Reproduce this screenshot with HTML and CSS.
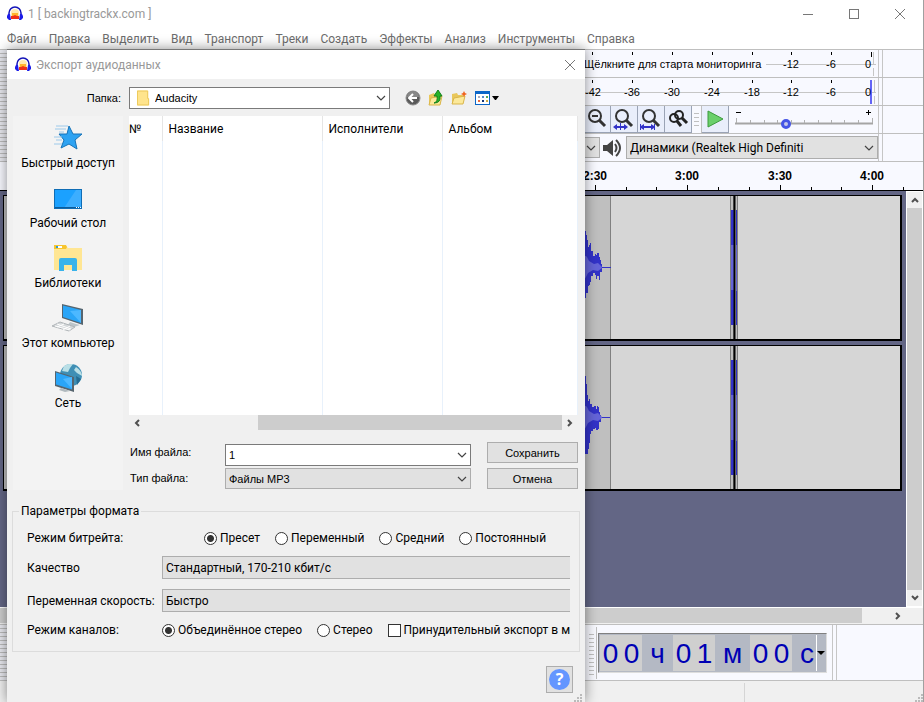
FILE: index.html
```html
<!DOCTYPE html>
<html lang="ru">
<head>
  <meta charset="UTF-8" />
  <meta name="viewport" content="width=device-width, initial-scale=1.0"/>
  <title>1 [ backingtrackx.com ]</title>
  <link rel="stylesheet" href="styles.css">
</head>
<body>

  <!-- shared symbols -->
  <svg class="defs" aria-hidden="true">
    <symbol id="logo" viewBox="0 0 16 16">
      <path d="M4 13V7a4 4 0 0 1 8 0v6z" fill="#ffe9b0"/>
      <path d="M5 7h6v4H5z" fill="#ffb52e"/>
      <path d="M4 10h2l2-1 2 1h2v3H4z" fill="#f0301a"/>
      <path d="M2 9V7a6 6 0 0 1 12 0v2" fill="none" stroke="#1414b8" stroke-width="1.500"/>
      <path d="M1 8h2l1 6H2L0 12V10zM15 8h-2l-1 6h2l2-2V10z" fill="#1c1ce8"/>
    </symbol>
    <symbol id="chevron" viewBox="0 0 10 6">
      <path d="M1 1l4 4 4-4" fill="none" stroke="#444" stroke-width="1.2"/>
    </symbol>
    <symbol id="arrow" viewBox="0 0 8 8">
      <path d="M1 6l3-3 3 3" fill="none" stroke="#505050" stroke-width="2"/>
    </symbol>
    <symbol id="close" viewBox="0 0 10 10">
      <path d="M0 0l10 10M10 0L0 10" fill="none" stroke="#777" stroke-width="1"/>
    </symbol>
    <symbol id="lens" viewBox="0 0 22 22">
      <circle cx="9" cy="8" r="6" fill="none" stroke="#333" stroke-width="2"/>
      <path d="M13 12l6 6" stroke="#333" stroke-width="3"/>
    </symbol>
    <symbol id="grip" viewBox="0 0 8 8">
      <path d="M6 0h2v2H6zM3 3h2v2H3zM6 3h2v2H6zM0 6h2v2H0zM3 6h2v2H3zM6 6h2v2H6z" fill="#bbb"/>
    </symbol>
  </svg>

  <div class="window">
    <header class="titlebar">
      <svg class="logo"><use href="#logo"/></svg>
      <h1>1 [ backingtrackx.com ]</h1>
      <div class="window-buttons">
        <button aria-label="Свернуть"><svg width="10" height="10"><path d="M0 5.5h10" stroke="#777"/></svg></button>
        <button aria-label="Развернуть"><svg width="10" height="10"><rect x=".5" y=".5" width="9" height="9" fill="none" stroke="#777"/></svg></button>
        <button aria-label="Закрыть"><svg width="10" height="10"><use href="#close"/></svg></button>
      </div>
    </header>

    <nav class="menubar">
      <a href="#">Файл</a>
      <a href="#">Правка</a>
      <a href="#">Выделить</a>
      <a href="#">Вид</a>
      <a href="#">Транспорт</a>
      <a href="#">Треки</a>
      <a href="#">Создать</a>
      <a href="#">Эффекты</a>
      <a href="#">Анализ</a>
      <a href="#">Инструменты</a>
      <a href="#">Справка</a>
    </nav>

    <!-- Toolbars -->
    <div class="toolbars">
      <div class="toolbar">
        <div class="dock"></div>
        <div class="tools">
          <svg class="meter" width="293" height="27">
            <path d="M0 14.500H292" stroke="#c6c6c6"/>
            <path d="M8.500 2v3M48.500 2v3M88.500 2v3M128.500 2v3M168.500 2v3M207.500 2v3M247.500 2v3M287.500 2v5" stroke="#000"/>
            <rect x="0" y="6" width="182" height="16" fill="#f8f9ff"/>
            <text x="0" y="18" class="hint">Щёлкните для старта мониторинга</text>
            <g class="marks"><text x="207" y="18">-12</text><text x="247" y="18">-6</text><text x="284" y="18">0</text></g>
            <path d="M289.500 2v12M289.500 18v8" stroke="#c6c6c6"/>
          </svg>
        </div>
      </div>
      <div class="toolbar">
        <div class="dock"></div>
        <div class="tools">
          <svg class="meter" width="293" height="27">
            <path d="M0 14.500H292" stroke="#c6c6c6"/>
            <path d="M8.500 2v3M48.500 2v3M88.500 2v3M128.500 2v3M168.500 2v3M207.500 2v3M247.500 2v3M287.500 2v5" stroke="#000"/>
            <rect x="286" y="2" width="2" height="24" fill="#6464f5"/>
            <g class="marks"><text x="9" y="18">-42</text><text x="48" y="18">-36</text><text x="88" y="18">-30</text><text x="128" y="18">-24</text><text x="168" y="18">-18</text><text x="207" y="18">-12</text><text x="247" y="18">-6</text><text x="284" y="18">0</text></g>
            <path d="M290.500 2v12M290.500 18v8" stroke="#c6c6c6"/>
          </svg>
        </div>
      </div>
      <div class="toolbar">
        <div class="dock"></div>
        <div class="tools">
          <button class="tool" aria-label="Уменьшить"><svg viewBox="0 0 22 22"><use href="#lens"/><path d="M6 8h6" stroke="#333" stroke-width="2"/></svg></button>
          <button class="tool" aria-label="Вместить выделенное"><svg viewBox="0 0 22 22"><use href="#lens"/><path d="M0 19l4-3v2h3v-3h1v3h3v-2l4 3-4 3v-2H8v2H7v-2H4v2z" fill="#3232c8"/></svg></button>
          <button class="tool" aria-label="Вместить проект"><svg viewBox="0 0 22 22"><use href="#lens"/><path d="M0 16h1v2l3-2v2h7v-2l3 2v-2h1v6h-1v-2l-3 2v-2H4v2l-3-2v2H0z" fill="#3232c8"/></svg></button>
          <button class="tool" aria-label="Переключить масштаб"><svg viewBox="0 0 22 22"><circle cx="7" cy="10" r="4" fill="none" stroke="#222" stroke-width="2"/><path d="M10 13l4 5" stroke="#222" stroke-width="3"/><circle cx="12" cy="7" r="4" fill="none" stroke="#222" stroke-width="2"/><path d="M15 10l5 5" stroke="#222" stroke-width="3"/></svg></button>
          <span class="gripper small"></span>
          <button class="tool play" aria-label="Воспроизвести"><svg viewBox="0 0 22 22"><path d="M4 3l15 8-15 8z" fill="#6bd06b" stroke="#3d9a3d"/></svg></button>
          <div class="speed">
            <svg width="140" height="27">
              <path d="M1 6.500h5M131 6.500h5M133.500 4v5" stroke="#000"/>
              <path d="M0 17.500h138" stroke="#a5a5a5" stroke-width="2"/>
              <path d="M1.500 12v5M15.500 14v3M29.500 14v3M42.500 14v3M56.500 14v3M69.500 14v3M83.500 14v3M96.500 14v3M109.500 14v3M123.500 14v3M137.500 12v5" stroke="#b0b0b0"/>
            </svg>
            <input type="range" min="0" max="100" value="36" aria-label="Скорость">
          </div>
        </div>
      </div>
      <div class="toolbar">
        <div class="dock"></div>
        <div class="tools devices">
          <div class="select channels">
            <select aria-label="Каналы"><option></option></select>
            <svg class="chevron"><use href="#chevron"/></svg>
          </div>
          <svg class="speaker" viewBox="0 0 20 20"><path d="M0 7h4l6-5v16l-6-5H0z" fill="#444"/><path d="M12 6q3 4 0 8M13 2q8 8 0 16" fill="none" stroke="#444" stroke-width="2"/></svg>
          <div class="select output">
            <select aria-label="Устройство воспроизведения"><option>Динамики (Realtek High Definiti</option></select>
            <svg class="chevron"><use href="#chevron"/></svg>
          </div>
        </div>
      </div>
    </div>

    <!-- Timeline -->
    <div class="timeline">
      <svg width="924" height="28">
        <g class="times"><text x="595" y="18">2:30</text><text x="687" y="18">3:00</text><text x="780" y="18">3:30</text><text x="872" y="18">4:00</text></g>
        <path d="M595.500 23v5M687.500 23v5M780.500 23v5M872.500 23v5M626.500 25v3M656.500 25v3M718.500 25v3M749.500 25v3M811.500 25v3M841.500 25v3M903.500 25v3" stroke="#000"/>
      </svg>
    </div>

    <!-- Tracks -->
    <div class="workspace">
      <div class="tracks">
        <div class="track">
          <svg class="wave" width="735" height="143">
            <rect x="0" y="0" width="606" height="143" fill="#bfbfbf"/>
            <path d="M606.500 0v143" stroke="#808080"/>
            <path d="M575 35h7v4h1v5h1v7h1v-2h1v-2h1v8h2v5h2v-2h1v1h1v-2h2v4h1v3h1v4h1v3h9v1h-9v4h-2v8h-1v-4h-2v3h-1v-4h-1v-2h-2v3h-2v6h-1v3h-1v1h-1v7h-2v5h-7z" fill="#3232c8"/>
            <path d="M575 60h7l1 1 2 4 5 3 4-1 2 2 2 2v1l-4 3-5-1-5 3-2 4-2 3h-5z" fill="#6464d8"/>
            <rect x="726" y="0" width="8" height="143" fill="#bfbfbf"/>
            <path d="M727 14h3v115h-3zM732 14h1v115h-1z" fill="#3232c8"/>
            <path d="M727 49h3v45h-3zM732 49h1v46h-1z" fill="#6464d8"/>
            <path d="M726.500 0v143M729.500 0v14M729.500 129v14M733.500 0v143" stroke="#808080"/>
            <path d="M730.500 0v143" stroke="#000" stroke-width="2"/>
          </svg>
        </div>
        <div class="track">
          <svg class="wave" width="735" height="143">
            <rect x="0" y="0" width="606" height="143" fill="#bfbfbf"/>
            <path d="M606.500 0v143" stroke="#808080"/>
            <path d="M575 30h7v8h1v11h1v6h1v-2h1v5h2v3h2v-1h2v3h1v-3h1v1h1v5h1v3h1v2h9v1h-9v4h-2v7h-1v1h-2v-2h-1v1h-2v2h-2v3h-1v9h-1v6h-1v5h-7z" fill="#3232c8"/>
            <path d="M575 60h7l1 1 2 4 5 3 4-1 2 2 2 2v1l-4 3-5-1-5 3-2 4-2 3h-5z" fill="#6464d8"/>
            <rect x="726" y="0" width="8" height="143" fill="#bfbfbf"/>
            <path d="M727 14h3v115h-3zM732 14h1v115h-1z" fill="#3232c8"/>
            <path d="M727 49h3v45h-3zM732 49h1v46h-1z" fill="#6464d8"/>
            <path d="M726.500 0v143M729.500 0v14M729.500 129v14M733.500 0v143" stroke="#808080"/>
            <path d="M730.500 0v143" stroke="#000" stroke-width="2"/>
          </svg>
        </div>
      </div>
      <div class="scroll-v">
        <button aria-label="Вверх"><svg width="8" height="8"><use href="#arrow"/></svg></button>
        <div class="thumb"></div>
        <button aria-label="Вниз" class="down"><svg width="8" height="8"><use href="#arrow"/></svg></button>
      </div>
    </div>
    <div class="scroll-h">
      <div class="thumb"></div>
      <button aria-label="Вправо" class="right"><svg width="8" height="8"><use href="#arrow"/></svg></button>
    </div>

    <!-- Time display -->
    <div class="bottombar">
      <div class="dock"></div>
      <div class="time-tool">
        <span class="gripper"></span>
        <div class="clock">
          <span class="digit">0</span><span class="digit">0</span><span class="unit">ч</span>
          <span class="digit">0</span><span class="digit">1</span><span class="unit wide">м</span>
          <span class="digit">0</span><span class="digit">0</span><span class="unit last">с</span>
          <button aria-label="Формат времени"><svg width="8" height="4"><path d="M0 0h8L4 4z"/></svg></button>
        </div>
      </div>
    </div>
    <footer class="statusbar">
      <div class="status-left"></div>
      <div class="status-right"><svg width="8" height="8"><use href="#grip"/></svg></div>
    </footer>
  </div>

  <!-- Export dialog -->
  <form class="dialog" role="dialog" aria-labelledby="dialog-title">
    <div class="dialog-title">
      <svg class="logo"><use href="#logo"/></svg>
      <h2 id="dialog-title">Экспорт аудиоданных</h2>
      <button type="button" aria-label="Закрыть"><svg width="10" height="10"><use href="#close"/></svg></button>
    </div>

    <div class="folder-row">
      <label for="folder">Папка:</label>
      <div class="select folder">
        <svg class="folder-icon" viewBox="0 0 14 16"><path d="M0 0h12v9h1v7H0z" fill="#ffe48c"/><path d="M.5.500h11v8h1v7H.500z" fill="none" stroke="#ecc758"/></svg>
        <select id="folder"><option>Audacity</option></select>
        <svg class="chevron"><use href="#chevron"/></svg>
      </div>
      <div class="folder-tools">
        <button type="button" aria-label="Назад"><svg width="16" height="16"><circle cx="8" cy="8" r="7" fill="#5a5a5a" stroke="#8c8c8c"/><path d="M2 7a6 6 0 0 1 12 0z" fill="#888"/><path d="M12 8H5M8 4L4 8l4 4" fill="none" stroke="#fff" stroke-width="2"/></svg></button>
        <button type="button" aria-label="Вверх"><svg width="16" height="16"><path d="M1 5l5-2 1 2h5v10H1z" fill="#e9c75a"/><path d="M3 8l11-2-2 9H1z" fill="#fce99a" stroke="#d9b54a"/><path d="M6 13q4-1 3-7H6l4-6 4 6h-2q1 7-6 7z" fill="#27b327" stroke="#13801b"/></svg></button>
        <button type="button" aria-label="Новая папка"><svg width="16" height="16"><path d="M1 4l5-1 1 2h5v9H1z" fill="#e9c75a"/><path d="M3 8l11-2-2 8H1z" fill="#fce99a" stroke="#d9b54a"/><path d="M13 1l1 2 2 1-2 1-1 2-1-2-2-1 2-1z" fill="#f0641e"/></svg></button>
        <button type="button" aria-label="Вид"><svg width="25" height="16"><rect x="1.500" y="2.500" width="14" height="12" fill="#fff" stroke="#0b66c8"/><path d="M1 1h15v3H1z" fill="#0b66c8"/><path d="M4 6h2v2H4z" fill="#aab"/><path d="M8 6h2v2H8z" fill="#58c"/><path d="M12 6h2v2h-2z" fill="#5a5"/><path d="M4 10h2v2H4z" fill="#e86a3a"/><path d="M8 10h2v2H8z" fill="#137"/><path d="M12 10h2v2h-2z" fill="#ca4"/><path d="M18 6h7l-3 4h-1z"/></svg></button>
      </div>
    </div>

    <div class="browser">
      <div class="places">
        <button type="button">
          <svg width="32" height="28"><path d="M17 2l4 8 9 0-7 6 2 9-8-5-8 4 3-8-5-6h8z" fill="#2ea3f2" stroke="#1673b8"/><path d="M4 2h12M3 5h11M7 8h5M2 13h8M4 16h6M2 20h8" stroke="#9cc9ea"/></svg>
          Быстрый доступ
        </button>
        <button type="button">
          <svg width="32" height="28"><rect x="2.500" y="5.500" width="27" height="19" fill="#1ba1ff" stroke="#0f6db5"/><path d="M12 24L24 6h5v18z" fill="#3caeff"/><path d="M3 23.500h26" stroke="#0b5c9c"/><path d="M24 23.500h5" stroke="#fff" stroke-dasharray="1 1"/></svg>
          Рабочий стол
        </button>
        <button type="button">
          <svg width="32" height="28"><path d="M2 2h12l2 2h14v22H2z" fill="#ffe693"/><path d="M2 1h12l1 2-1 2H2z" fill="#f7c52e"/><path d="M4 2h6v2H4z" fill="#fff"/><path d="M4 2h2v2H4z" fill="#2e9bd6"/><path d="M7 27V16q0-2 2-2h14q2 0 2 2v11h-5v-6h-8v6z" fill="#39b3ea"/></svg>
          Библиотеки
        </button>
        <button type="button">
          <svg width="32" height="28"><path d="M10 0l21 5v16l-21-7z" fill="#56656f"/><path d="M11 1.500l18 4.500v13l-18-6z" fill="#2aa5f7"/><path d="M18 7l11-1v13z" fill="#4db8ff"/><path d="M18 18l6 2 4 1-6 2-6-2z" fill="#bcc5ca"/><path d="M8 18l15 5-6 4-17-5z" fill="#d5d9db" stroke="#b0b5b8"/><path d="M5 20l14 5M3 22l15 4M12 20l-7 3M18 22l-7 4" stroke="#fff"/></svg>
          Этот компьютер
        </button>
        <button type="button">
          <svg width="32" height="28"><circle cx="19" cy="11" r="11" fill="#3f8fb5"/><path d="M12 2q5-3 9-2l-3 4-2 4-6-1zM24 3q6 4 6 9l-5-3-3-3z" fill="#b9dfe6"/><path d="M24 12l5 3-4 6z" fill="#256c93"/><path d="M3 7l19 6v15L3 22z" fill="#56656f"/><path d="M4 8.500l16 5v12L4 20.500z" fill="#2aa5f7"/><path d="M11 15l9-2v12z" fill="#4db8ff"/><path d="M9 24l9 3-5 1-6-2z" fill="#b0b9be"/></svg>
          Сеть
        </button>
      </div>

      <div class="main-pane">
        <table class="files">
          <thead>
            <tr><th>№</th><th>Название</th><th>Исполнители</th><th>Альбом</th></tr>
          </thead>
          <tbody>
            <tr><td></td><td></td><td></td><td></td></tr>
          </tbody>
        </table>
        <div class="list-scroll">
          <button type="button" class="left" aria-label="Влево"><svg width="8" height="8"><use href="#arrow"/></svg></button>
          <div class="thumb"></div>
          <button type="button" class="right" aria-label="Вправо"><svg width="8" height="8"><use href="#arrow"/></svg></button>
        </div>

        <div class="save-grid">
          <label for="filename">Имя файла:</label>
          <div class="select white">
            <input type="text" id="filename" value="1">
            <svg class="chevron"><use href="#chevron"/></svg>
          </div>
          <button type="submit" class="push">Сохранить</button>
          <label for="filetype">Тип файла:</label>
          <div class="select">
            <select id="filetype"><option>Файлы MP3</option></select>
            <svg class="chevron"><use href="#chevron"/></svg>
          </div>
          <button type="button" class="push">Отмена</button>
        </div>
      </div>
    </div>

    <fieldset>
      <legend>Параметры формата</legend>
      <div class="option-row modes">
        <span class="option-label">Режим битрейта:</span>
        <label><input type="radio" name="mode" checked>Пресет</label>
        <label><input type="radio" name="mode">Переменный</label>
        <label><input type="radio" name="mode">Средний</label>
        <label><input type="radio" name="mode">Постоянный</label>
      </div>
      <div class="option-row">
        <label class="option-label" for="quality">Качество</label>
        <div class="select cut"><select id="quality"><option>Стандартный, 170-210 кбит/с</option></select></div>
      </div>
      <div class="option-row">
        <label class="option-label" for="speed">Переменная скорость:</label>
        <div class="select cut"><select id="speed"><option>Быстро</option></select></div>
      </div>
      <div class="option-row stereo">
        <span class="option-label">Режим каналов:</span>
        <label><input type="radio" name="channels" checked>Объединённое стерео</label>
        <label><input type="radio" name="channels">Стерео</label>
        <label><input type="checkbox">Принудительный экспорт в мо</label>
      </div>
    </fieldset>

    <div class="dialog-footer">
      <button type="button" class="help" aria-label="Справка"><span>?</span></button>
    </div>
    <svg class="dialog-grip" width="8" height="8"><use href="#grip"/></svg>
  </form>

</body>
</html>
```
FILE: styles.css
```css
* {
  box-sizing: border-box;
}

body {
  margin: 0;
  font-family: Roboto, "Noto Sans", sans-serif;
  font-size: 12px;
  color: #000;
  background: #f0f0f0;
  position: relative;
  min-height: 100vh;
  overflow: hidden;
}

button,
input,
select {
  font: inherit;
  color: inherit;
  margin: 0;
  padding: 0;
  border: 0;
  background: none;
  border-radius: 0;
}

svg {
  display: block;
  flex: none;
}

.defs {
  position: absolute;
  width: 0;
  height: 0;
}

.logo {
  width: 16px;
  height: 16px;
}

/* Main window */
.window {
  display: flex;
  flex-direction: column;
  min-height: 100vh;
  border-right: 1px solid #a0a0a0;
}

.titlebar {
  display: flex;
  align-items: center;
  height: 27px;
  padding-left: 7px;
  background: #fff;
}

h1,
h2 {
  margin: 0;
  padding-left: 5px;
  font-size: 12px;
  font-weight: normal;
  color: #999;
}

.window-buttons {
  display: flex;
  margin-left: auto;
}

.window-buttons button {
  display: flex;
  width: 46px;
  height: 28px;
  align-items: center;
  justify-content: center;
}

.menubar {
  display: flex;
  gap: 12px;
  height: 22px;
  padding-left: 7px;
  line-height: 24px;
  background: #fff;
}

.menubar a {
  color: #6d6d6d;
  text-decoration: none;
}

.toolbars {
  background: #f8f9ff;
}

.toolbar {
  display: flex;
  height: 28px;
  border-top: 1px solid #bfbfbf;
}

.dock {
  width: 584px;
  flex: none;
  background: repeating-linear-gradient(#e8e9ef 0 3px, #bbb 3px 4px);
  border-right: 1px solid #bfbfbf;
}

.tools {
  display: flex;
  align-items: center;
  width: 299px;
  border-right: 1px solid #c6c6c6;
}

.tools::after {
  content: "";
  width: 1px;
  height: 27px;
  margin-left: auto;
  margin-right: 3px;
  background: #c6c6c6;
}

.meter text {
  font-family: "Liberation Sans", sans-serif;
  font-size: 11px;
}

.marks,
.times {
  text-anchor: middle;
}

.times {
  font-family: "Liberation Sans", sans-serif;
  font-size: 12px;
  font-weight: bold;
}

.tool {
  width: 27px;
  height: 27px;
  padding: 2px;
  background: #e9eefb;
  border-right: 1px solid #9aa3b5;
  border-bottom: 1px solid #9aa3b5;
}

.gripper {
  width: 10px;
  height: 52px;
  border-right: 1px solid #bfbfbf;
  background: repeating-linear-gradient(#f8f9ff 0 3px, #c0c0c0 3px 4px) content-box;
  padding: 4px 2px;
}

.gripper.small {
  height: 27px;
}

.speed {
  position: relative;
  margin-left: 6px;
}

.speed input {
  position: absolute;
  left: 0;
  top: 8px;
  width: 138px;
  height: 20px;
  appearance: none;
}

.speed input::-webkit-slider-thumb {
  appearance: none;
  width: 10px;
  height: 10px;
  border: 3px solid #4655e6;
  border-radius: 50%;
  background: #c6c9e8;
}

/* Drop-downs */
.select {
  display: flex;
  align-items: center;
  position: relative;
  height: 21px;
  border: 1px solid #adadad;
  background: #e1e1e1;
}

.select select,
.select input {
  appearance: none;
  flex: 1;
  min-width: 0;
  height: 100%;
  padding: 0 3px;
  outline: 0;
}

.select .chevron {
  position: absolute;
  right: 3px;
  width: 10px;
  height: 6px;
  pointer-events: none;
}

.select.white {
  height: 22px;
}

.select.white,
.select.folder {
  background: #fff;
  border-color: #7a7a7a;
}

.select.channels {
  width: 16px;
  border-left: 0;
}

.speaker {
  width: 20px;
  height: 20px;
  margin: 0 3px;
}

.select.output {
  width: 252px;
  height: 23px;
}

/* Timeline and tracks */
.timeline {
  height: 30px;
  overflow: hidden;
  background: #f8f9ff;
  border-top: 1px solid #bfbfbf;
  border-bottom: 1px solid #000;
}

.workspace {
  display: flex;
  flex: 1;
  background: #636685;
}

.tracks {
  display: flex;
  flex-direction: column;
  flex: 1;
  gap: 4px;
  min-width: 0;
  padding: 4px 4px 0 3px;
}

.track {
  height: 146px;
  overflow: hidden;
  border: 1px solid #000;
  border-right-width: 2px;
  border-bottom-width: 2px;
  background: #d6d6d6;
}

.scroll-v {
  display: flex;
  flex-direction: column;
  width: 17px;
  border: 1px solid #fff;
  background: #f0f0f0;
}

.scroll-v .thumb {
  flex: 1;
  background: #cdcdcd;
}

.scroll-v button,
.scroll-h button,
.list-scroll button {
  display: flex;
  width: 16px;
  height: 16px;
  align-items: center;
  justify-content: center;
}

.down svg {
  transform: rotate(180deg);
}

.right svg {
  transform: rotate(90deg);
}

.left svg {
  transform: rotate(-90deg);
}

.scroll-h {
  display: flex;
  justify-content: space-between;
  height: 17px;
  padding-right: 17px;
  border-top: 1px solid #fff;
  background: #f0f0f0;
}

.scroll-h .thumb {
  width: 862px;
  height: 15px;
  background: #cdcdcd;
}

.bottombar {
  display: flex;
  height: 57px;
  border-top: 1px solid #bfbfbf;
  border-bottom: 1px solid #bfbfbf;
  background: #f8f9ff;
}

.time-tool {
  display: flex;
  align-items: center;
  width: 253px;
  padding-left: 3px;
  border-right: 1px solid #c6c6c6;
  box-shadow: inset -3px 0 #f8f9ff, inset -4px 0 #c6c6c6;
}

.clock {
  display: flex;
  height: 40px;
  margin-left: 1px;
  padding: 1px;
  border: 1px solid #808080;
  border-right-color: #ddd;
  border-bottom-color: #ddd;
  background: #b4b9c4;
  color: #0000b4;
  font: 28px/38px "Liberation Sans", sans-serif;
  text-align: center;
}

.digit {
  width: 21px;
  background: #cfcfcf;
}

.unit {
  width: 31px;
}

.unit.wide {
  width: 35px;
}

.unit.last {
  width: 24px;
  padding-left: 6px;
}

.clock button {
  width: 9px;
  border-left: 1px solid #fff;
}

.statusbar {
  display: flex;
  height: 21px;
  padding-top: 2px;
}

.status-left {
  width: 745px;
  border-right: 1px solid #d5d5d5;
}

.status-right {
  display: flex;
  flex: 1;
  align-items: flex-end;
  justify-content: flex-end;
}

/* Export dialog */
.dialog {
  display: flex;
  flex-direction: column;
  position: absolute;
  left: 7px;
  top: 49px;
  bottom: 0;
  width: 578px;
  border-top: 1px solid #777;
  background: #f0f0f0;
  box-shadow: 0 0 12px rgba(0, 0, 0, 0.45);
}

.dialog-title {
  display: flex;
  align-items: center;
  height: 29px;
  padding: 0 10px 0 8px;
  background: #fff;
}

.dialog-title button {
  margin-left: auto;
}

.folder-row {
  display: flex;
  align-items: center;
  height: 37px;
}

.folder-row > label {
  width: 122px;
  padding-right: 8px;
  text-align: right;
}

.folder-row,
.save-grid {
  font-family: "Liberation Sans", sans-serif;
  font-size: 11px;
}

.select.folder {
  width: 261px;
  height: 22px;
  padding-left: 7px;
}

.select.folder select {
  padding-left: 5px;
}

.folder-icon {
  width: 13px;
  height: 16px;
}

.folder-tools {
  display: flex;
  gap: 7px;
  margin-left: 15px;
}

.browser {
  display: flex;
  padding: 0 7px 0 6px;
}

.places {
  display: flex;
  flex-direction: column;
  width: 110px;
  height: 374px;
  padding-top: 8px;
  background: #f3f3f3;
}

.places button {
  display: flex;
  flex-direction: column;
  align-items: center;
  height: 60px;
  line-height: 22px;
  white-space: nowrap;
}

.main-pane {
  flex: 1;
  margin-left: 6px;
}

.files {
  width: 100%;
  height: 299px;
  table-layout: fixed;
  border-collapse: collapse;
  background: #fff;
}

.files th {
  width: 120px;
  height: 25px;
  padding: 1px 0 0 6px;
  font-weight: normal;
  text-align: left;
  border-right: 1px solid #e5e5e5;
}

.files th:nth-child(1) {
  width: 33px;
  padding-left: 0;
}

.files th:nth-child(2) {
  width: 160px;
}

.files th:nth-child(4) {
  width: auto;
}

.files td {
  border-right: 1px solid #e8f1fb;
}

.list-scroll {
  display: flex;
  height: 15px;
}

.list-scroll .thumb {
  width: 304px;
  height: 15px;
  margin-left: auto;
  background: #cdcdcd;
}

.save-grid {
  display: grid;
  grid-template-columns: 96px 246px 107px;
  row-gap: 2px;
  margin-top: 12px;
}

.save-grid label {
  padding: 4px 0 0 1px;
}

.save-grid .select.white {
  margin-top: 2px;
}

.save-grid .push {
  margin-left: 16px;
  width: 91px;
}

.push {
  height: 21px;
  border: 1px solid #adadad;
  background: #e1e1e1;
}

fieldset {
  min-width: 0;
  height: 149px;
  margin: 13px 5px 0;
  padding: 6px 9px 0 14px;
  border: 1px solid #dcdcdc;
}

legend {
  margin-left: -8px;
  padding: 0 2px;
  line-height: 16px;
}

.option-row {
  display: flex;
  align-items: center;
  height: 33px;
  overflow: hidden;
  white-space: nowrap;
}

.option-row.modes,
.option-row.stereo {
  height: 26px;
}

.option-label {
  width: 135px;
  flex: none;
}

.option-row label:not(.option-label) {
  display: flex;
  align-items: center;
  gap: 3px;
  margin-right: 15px;
}

.modes .option-label {
  width: 177px;
}

input[type="radio"],
input[type="checkbox"] {
  appearance: none;
  flex: none;
  width: 13px;
  height: 13px;
  border: 1px solid #333;
  background: #fff;
}

input[type="radio"] {
  border-radius: 50%;
}

input[type="radio"]:checked {
  background: radial-gradient(circle, #333 3px, #fff 4px);
}

.select.cut {
  flex: 1;
  height: 23px;
  border-right: 0;
}

.dialog-footer {
  display: flex;
  justify-content: flex-end;
  padding: 14px 12px 0;
}

.help {
  width: 27px;
  height: 27px;
  border: 1px solid #adadad;
  background: #e1e1e1;
}

.help span {
  display: block;
  width: 21px;
  height: 21px;
  margin: 0 auto;
  border-radius: 50%;
  background: #6496ff;
  color: #fff;
  font: bold 16px/21px "Open Sans", sans-serif;
}

.dialog-grip {
  position: absolute;
  right: 3px;
  bottom: 0;
}
```
